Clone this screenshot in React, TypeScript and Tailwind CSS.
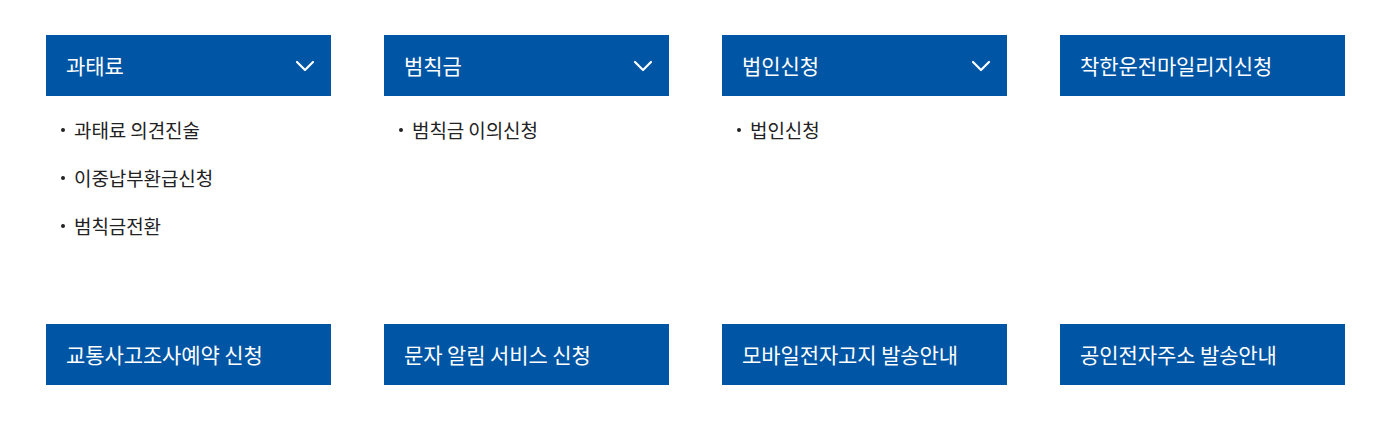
import { ChevronDown } from 'lucide-react'

interface Menu {
  title: string
  items?: string[]
}

const ROW1: Menu[] = [
  { title: '과태료', items: ['과태료 의견진술', '이중납부환급신청', '범칙금전환'] },
  { title: '범칙금', items: ['범칙금 이의신청'] },
  { title: '법인신청', items: ['법인신청'] },
  { title: '착한운전마일리지신청' },
]

const ROW2: Menu[] = [
  { title: '교통사고조사예약 신청' },
  { title: '문자 알림 서비스 신청' },
  { title: '모바일전자고지 발송안내' },
  { title: '공인전자주소 발송안내' },
]

function Card({ menu }: { menu: Menu }) {
  return (
    <div>
      <div className="h-[61px] bg-[#0055a5] text-white flex items-center justify-between pl-[20px] pr-[10px]">
        <span className="text-[21px] font-normal tracking-[-0.1px]">{menu.title}</span>
        {menu.items && <ChevronDown size={32} strokeWidth={1.6} />}
      </div>
      {menu.items && (
        <ul className="pt-[10px]">
          {menu.items.map(it => (
            <li key={it} className="h-[48px] flex items-center pl-[15px] text-[19px] text-[#222] tracking-[-0.1px]">
              <span className="w-[4px] h-[4px] rounded-full bg-[#222] mr-[9px]" />
              {it}
            </li>
          ))}
        </ul>
      )}
    </div>
  )
}

export default function App() {
  return (
    <div
      className="w-[1377px] h-[433px] bg-white pl-[46px] pt-[35px]"
      style={{ fontFamily: '"Noto Sans CJK KR", "Noto Sans", sans-serif' }}
    >
      <div className="grid grid-cols-[repeat(4,285px)] gap-x-[53px] items-start h-[289px]">
        {ROW1.map(m => <Card key={m.title} menu={m} />)}
      </div>
      <div className="grid grid-cols-[repeat(4,285px)] gap-x-[53px]">
        {ROW2.map(m => <Card key={m.title} menu={m} />)}
      </div>
    </div>
  )
}
